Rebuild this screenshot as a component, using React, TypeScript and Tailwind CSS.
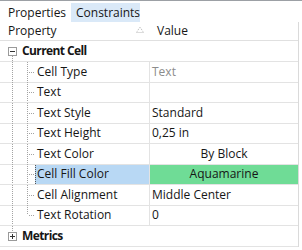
import React from "react";

type Row = {
  label: string;
  value: string;
  muted?: boolean;
  center?: boolean;
  selected?: boolean;
  fill?: boolean;
  last?: boolean;
};

const rows: Row[] = [
  { label: "Cell Type", value: "Text", muted: true },
  { label: "Text", value: "" },
  { label: "Text Style", value: "Standard" },
  { label: "Text Height", value: "0,25 in" },
  { label: "Text Color", value: "By Block", center: true },
  { label: "Cell Fill Color", value: "Aquamarine", center: true, selected: true, fill: true },
  { label: "Cell Alignment", value: "Middle Center" },
  { label: "Text Rotation", value: "0", last: true },
];

const dot = "#a3a3a3";

// box with - or +
const Expander: React.FC<{ open: boolean; tail: boolean; head: boolean }> = ({ open, tail, head }) => (
  <svg width="36" height="20" className="shrink-0">
    {head && <line x1="12.5" y1="0" x2="12.5" y2="6" stroke={dot} strokeDasharray="1 1" />}
    {tail && <line x1="12.5" y1="15" x2="12.5" y2="21" stroke={dot} strokeDasharray="1 1" />}
    <rect x="8.5" y="6.5" width="8" height="8" fill="#fff" stroke="#9a9a9a" />
    <line x1="10" y1="10.5" x2="15" y2="10.5" stroke="#333" />
    {!open && <line x1="12.5" y1="8" x2="12.5" y2="13" stroke="#333" />}
  </svg>
);

const ChildTree: React.FC<{ last?: boolean }> = ({ last }) => (
  <svg width="36" height="20" className="shrink-0">
    <line x1="12.5" y1="0" x2="12.5" y2="21" stroke={dot} strokeDasharray="1 1" />
    <line x1="27.5" y1="0" x2="27.5" y2={last ? 10 : 21} stroke={dot} strokeDasharray="1 1" />
    <line x1="29" y1="10.5" x2="35" y2="10.5" stroke={dot} strokeDasharray="1 1" />
  </svg>
);

export default function App() {
  return (
    <div className="w-[302px] h-[250px] overflow-hidden bg-white text-[12px] text-[#161616] font-['Open_Sans',sans-serif] leading-none">
      <div className="h-px bg-[#9ca0a5]" />

      {/* tabs */}
      <div className="flex h-[21px] items-end">
        <div className="w-[71px] h-[19px] pl-2 flex items-center bg-white">Properties</div>
        <div className="w-[69px] h-[19px] pl-[5px] flex items-center bg-[#dae9f8]">Constraints</div>
      </div>

      <div className="w-[299px] border-r border-[#dadada]">
        {/* header */}
        <div className="flex h-[19px] items-center border-b border-[#e0e0e0]">
          <div className="w-[150px] pl-2 flex items-center justify-between pr-[5px]">
            <span>Property</span>
            <svg width="10" height="7" className="mb-1">
              <path d="M1.5 6.5 L8.5 6.5 L5 1 Z" fill="none" stroke="#b8b8b8" strokeDasharray="1 1" />
            </svg>
          </div>
          <div className="pl-[7px]">Value</div>
        </div>

        {/* category */}
        <div className="flex h-[21px] items-center border-b border-[#e3e3e3]">
          <Expander open head={false} tail />
          <span className="font-bold tracking-[-0.6px] -ml-[14px]">Current Cell</span>
        </div>

        {rows.map((r) => (
          <div key={r.label} className="flex h-[20.5px] border-b border-[#e3e3e3]">
            <div className="w-[150px] flex items-center border-r border-[#e3e3e3]">
              <ChildTree last={r.last} />
              <div
                className={
                  "flex-1 h-full flex items-center " +
                  (r.selected ? "bg-[#b8d8f4] border-l border-dotted border-[#555] pl-px -ml-px" : "pl-px")
                }
              >
                {r.label}
              </div>
            </div>
            <div
              className={
                "flex-1 flex items-center px-[2px] " +
                (r.center ? "justify-center " : "") +
                (r.fill ? "bg-[#6fdc96] " : "") +
                (r.muted ? "text-[#8c8c8c]" : "")
              }
            >
              {r.value}
            </div>
          </div>
        ))}

        {/* category */}
        <div className="flex h-[21px] items-center border-b border-[#e3e3e3]">
          <Expander open={false} head tail={false} />
          <span className="font-bold tracking-[-0.6px] -ml-[14px]">Metrics</span>
        </div>
      </div>
    </div>
  );
}
